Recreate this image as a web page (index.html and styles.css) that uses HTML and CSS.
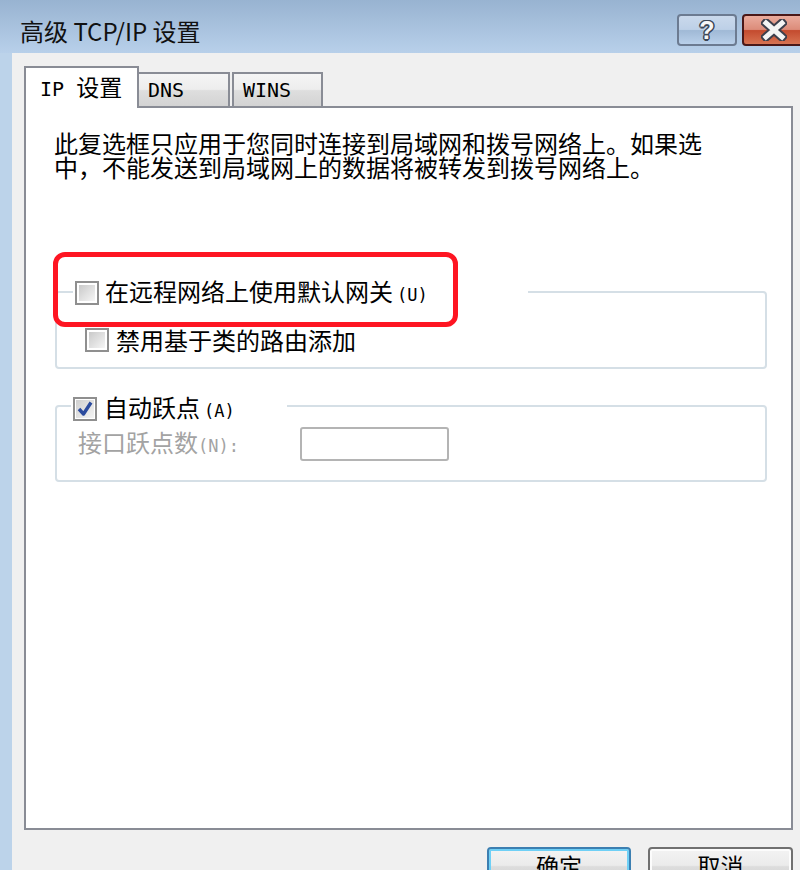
FILE: index.html
```html
<!DOCTYPE html>
<html lang="zh-CN">
<head>
<meta charset="utf-8">
<title>高级 TCP/IP 设置</title>
<link rel="stylesheet" href="styles.css">
</head>
<body>
<div class="window">
  <div class="titlebar">
    <div class="title">高级 TCP/IP 设置</div>
    <div class="caption-buttons">
      <div class="cap-btn help"><span class="qmark">?</span></div>
      <div class="cap-btn close">
        <svg class="x-icon" width="26" height="22" viewBox="0 0 26 22">
          <path d="M5 4 L21 18 M21 4 L5 18" stroke="#3d3f4c" stroke-width="9" stroke-linecap="square" fill="none"/>
          <path d="M5 4 L21 18 M21 4 L5 18" stroke="#f4f4f4" stroke-width="5" stroke-linecap="square" fill="none"/>
        </svg>
      </div>
    </div>
  </div>
  <div class="frame">
    <div class="frame-edge"></div>
    <div class="client">
      <div class="tabs">
        <div class="tab active"><span class="lat">IP </span><span class="cjk">设置</span></div>
        <div class="tab dns"><span class="lat">DNS</span></div>
        <div class="tab wins"><span class="lat">WINS</span></div>
      </div>
      <div class="panel">
        <p class="desc">此复选框只应用于您同时连接到局域网和拨号网络上。如果选<br>中，不能发送到局域网上的数据将被转发到拨号网络上。</p>
        <div class="group g1">
          <div class="legend l1">
            <span class="cb"></span>
            <span class="label">在远程网络上使用默认网关<span class="acc">(U)</span></span>
          </div>
          <div class="row r1">
            <span class="cb"></span>
            <span class="label">禁用基于类的路由添加</span>
          </div>
        </div>
        <div class="group g2">
          <div class="legend l2">
            <span class="cb checked">
              <svg width="18" height="18" viewBox="0 0 18 18"><path d="M3 9 L7.5 14 L15 2.5" stroke="#2b4b9e" stroke-width="3.4" fill="none" stroke-linejoin="round"/></svg>
            </span>
            <span class="label">自动跃点<span class="acc">(A)</span></span>
          </div>
          <div class="row r2">
            <span class="label disabled">接口跃点数<span class="acc">(N):</span></span>
            <span class="input"></span>
          </div>
        </div>
      </div>
      <div class="buttons">
        <div class="btn default">确定</div>
        <div class="btn">取消</div>
      </div>
    </div>
  </div>
  <div class="highlight"></div>
</div>
</body>
</html>
```
FILE: styles.css
```css
* { box-sizing: border-box; }
html, body { margin: 0; padding: 0; }
body {
  width: 800px;
  height: 870px;
  overflow: hidden;
  background: #f0f0f0;
  font-family: "Noto Sans CJK SC", sans-serif;
  color: #000;
}
.window {
  position: relative;
  width: 800px;
  height: 870px;
  display: flex;
  flex-direction: column;
  overflow: hidden;
}
.titlebar {
  height: 53px;
  flex: none;
  display: flex;
  align-items: flex-start;
  padding-left: 20px;
  background: linear-gradient(#98b3d1, #b8d0ea);
}
.title {
  margin-top: 15px;
  font-size: 24px;
  line-height: 32px;
  color: #111;
  white-space: nowrap;
}
.caption-buttons {
  margin-left: auto;
  margin-top: 14px;
  margin-right: -10px;
  display: flex;
  gap: 5px;
}
.cap-btn {
  height: 32px;
  border: 2px solid;
  border-radius: 4px;
  display: flex;
  align-items: center;
  justify-content: center;
}
.help {
  width: 60px;
  border-color: #6c7b91;
  background: linear-gradient(#cad9ec 0%, #bdd0e7 48%, #a0b9d6 52%, #b9d0ea 100%);
}
.qmark {
  font-family: "Liberation Sans", sans-serif;
  font-weight: bold;
  font-size: 25px;
  line-height: 28px;
  color: #f6f6f6;
  text-shadow: 1.5px 0 #3c4656, -1.5px 0 #3c4656, 0 1.5px #3c4656, 0 -1.5px #3c4656,
    1px 1px #3c4656, -1px -1px #3c4656, 1px -1px #3c4656, -1px 1px #3c4656;
}
.close {
  width: 68px;
  border-color: #4a1818;
  background: linear-gradient(#eaab9d 0%, #dc8c7a 48%, #c44b2f 52%, #d77352 100%);
  justify-content: flex-start;
  padding-left: 17px;
}
.frame {
  flex: 1;
  display: flex;
}
.frame-edge {
  width: 12px;
  flex: none;
  background: #bcd3ea;
}
.client {
  flex: 1;
  display: flex;
  flex-direction: column;
  padding: 13px 7px 0 12px;
}
.tabs {
  height: 40px;
  flex: none;
  display: flex;
  align-items: flex-end;
}
.tab {
  height: 34px;
  border: 2px solid #898c95;
  border-bottom: none;
  background: linear-gradient(#f5f5f5 0%, #ededed 48%, #dedede 52%, #d3d3d3 100%);
  padding: 2px 0 0 9px;
  line-height: 28px;
  white-space: nowrap;
}
.lat {
  font-family: "DejaVu Sans Mono", monospace;
  font-size: 20px;
}
.cjk {
  font-size: 23px;
}
.tab.active {
  position: relative;
  z-index: 1;
  width: 115px;
  height: 42px;
  margin-bottom: -2px;
  background: #fff;
  padding: 5px 0 0 14px;
  line-height: 26px;
}
.tab.dns {
  width: 93px;
  margin-left: -2px;
}
.tab.wins {
  width: 91px;
  margin-left: 2px;
  padding-left: 9px;
}
.panel {
  flex: none;
  height: 724px;
  border: 2px solid #898c95;
  background: #fff;
}
.desc {
  margin: 23px 0 0 28px;
  font-size: 24px;
  line-height: 24px;
  white-space: nowrap;
}
.group {
  border: 2px solid #d5dfe6;
  border-radius: 4px;
  margin-left: 29px;
  margin-right: 24px;
}
.g1 {
  margin-top: 112px;
  padding-bottom: 15px;
}
.g2 {
  margin-top: 36px;
  padding-bottom: 19px;
}
.legend {
  height: 24px;
  display: flex;
  align-items: center;
  background: #fff;
  padding-left: 2px;
  font-size: 24px;
  line-height: 24px;
  white-space: nowrap;
}
.l1 {
  margin-top: -12px;
  margin-left: 16px;
  width: 455px;
  gap: 6px;
}
.l2 {
  margin-top: -10px;
  margin-left: 14px;
  width: 216px;
  gap: 7px;
}
.acc {
  font-family: "DejaVu Sans Mono", monospace;
  font-size: 17px;
  margin-left: 4px;
}
.row {
  display: flex;
  align-items: center;
  font-size: 24px;
  line-height: 24px;
  white-space: nowrap;
}
.r1 {
  margin-top: 23px;
  margin-left: 28px;
  height: 24px;
  gap: 7px;
}
.r2 {
  margin-top: 6px;
  margin-left: 21px;
  height: 34px;
}
.cb {
  width: 24px;
  height: 24px;
  flex: none;
  border: 2px solid #8f8f8f;
  padding: 2px;
  background: linear-gradient(135deg, #c9c9c9, #f6f6f6) content-box, #fff;
  display: flex;
  align-items: center;
  justify-content: center;
}
.cb.checked {
  padding: 1px;
  background: linear-gradient(135deg, #cfcfcf, #f4f4f4) content-box, #fff;
}
.disabled {
  color: #a3a3a3;
  width: 222px;
}
.disabled .acc {
  margin-left: 0;
}
.input {
  width: 149px;
  height: 34px;
  border: 2px solid #b4b4b4;
  border-radius: 3px;
  background: #fff;
}
.buttons {
  display: flex;
  justify-content: flex-end;
  gap: 17px;
  margin-top: 17px;
}
.btn {
  width: 145px;
  height: 38px;
  flex: none;
  border: 2px solid #707070;
  border-radius: 4px;
  background: linear-gradient(#f3f3f3 0%, #ebebeb 48%, #dddddd 52%, #cfcfcf 100%);
  box-shadow: inset 0 0 0 2px #fcfcfc;
  font-size: 23px;
  line-height: 32px;
  text-align: center;
}
.btn.default {
  width: 144px;
  border-color: #3c7fb1;
  box-shadow: inset 0 0 0 2px #6fd0f6;
}
.highlight {
  position: absolute;
  left: 53px;
  top: 252px;
  width: 405px;
  height: 75px;
  border: 5px solid #fe1522;
  border-radius: 12px;
  z-index: 2;
}
```
